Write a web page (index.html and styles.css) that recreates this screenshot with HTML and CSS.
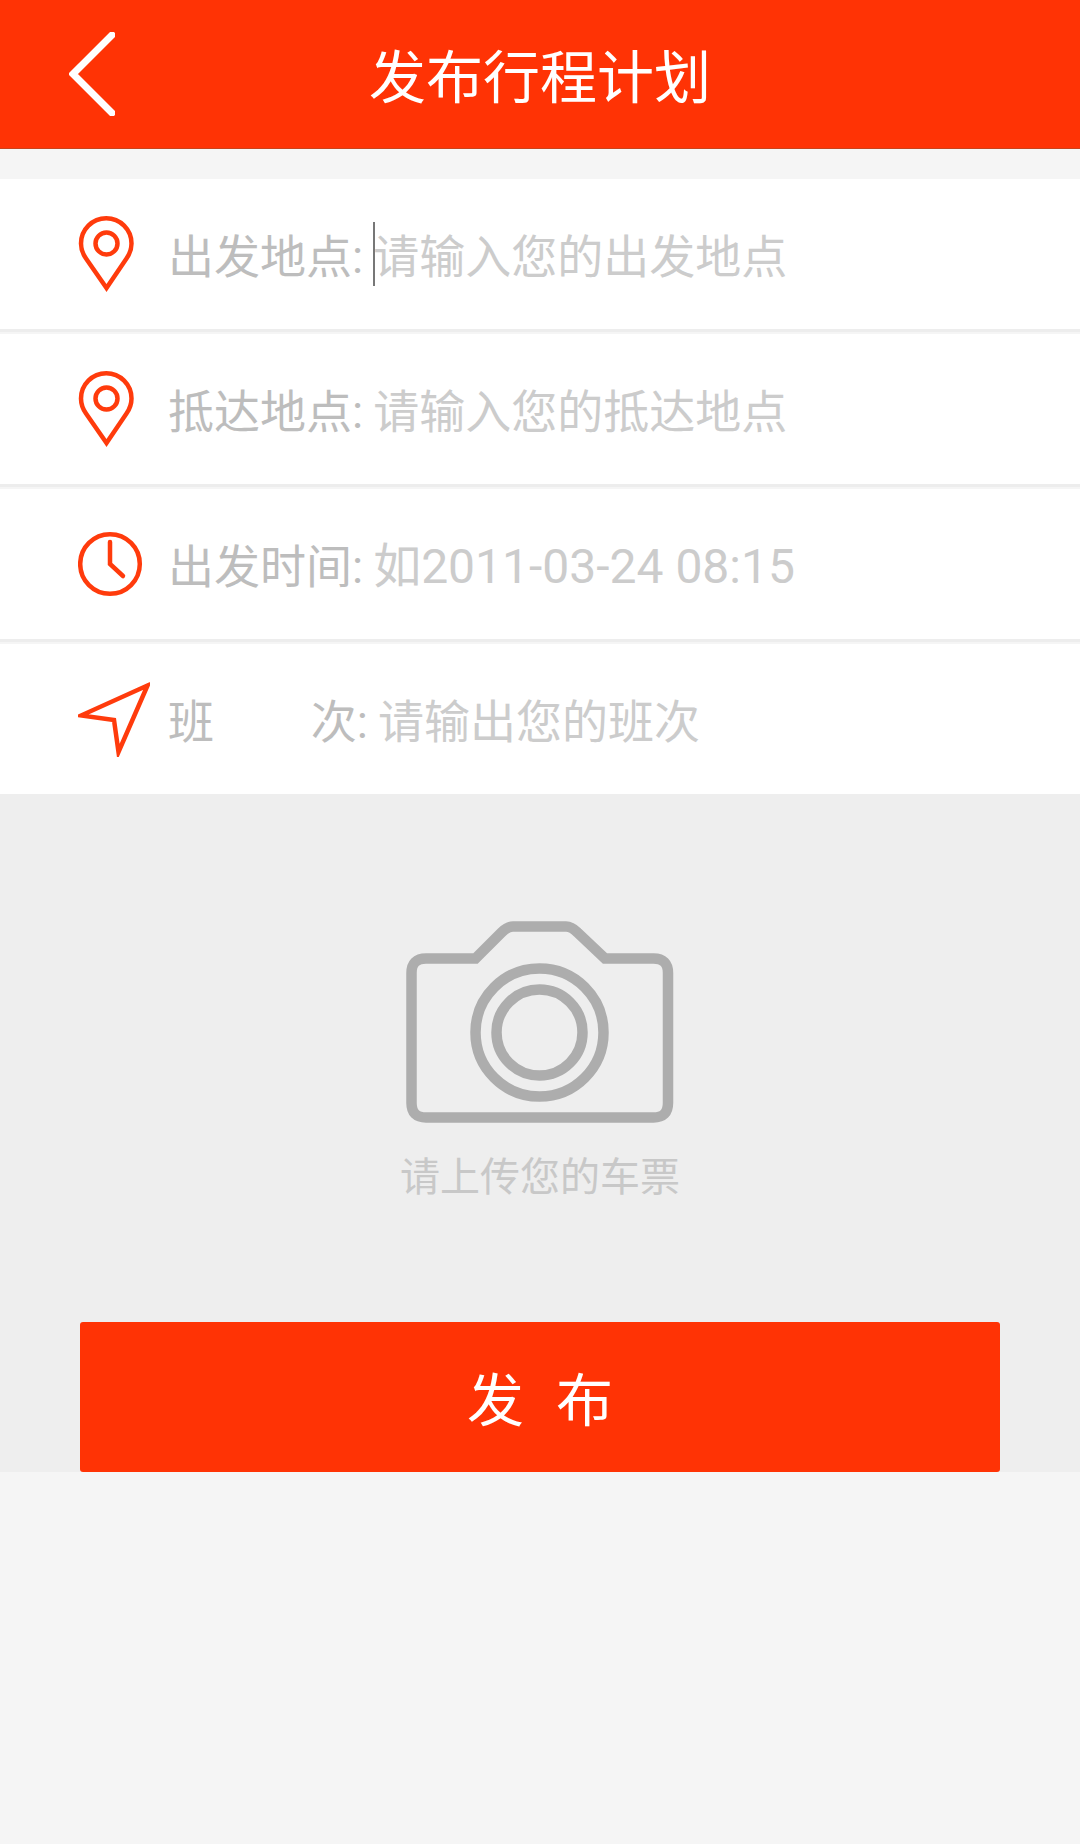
FILE: index.html
```html
<!DOCTYPE html>
<html lang="zh-CN">
<head>
<meta charset="utf-8">
<meta name="viewport" content="width=device-width, initial-scale=1">
<title>发布行程计划</title>
<link rel="stylesheet" href="styles.css">
</head>
<body>
<header class="topbar">
  <a class="back" href="#" aria-label="返回">
    <svg width="46" height="84" viewBox="0 0 46 84" aria-hidden="true"><path d="M43 3L4 42l39 39" fill="none" stroke="#fff" stroke-width="7" stroke-linecap="round"/></svg>
  </a>
  <h1 class="title">发布行程计划</h1>
</header>

<form class="plan">
  <div class="row">
    <svg class="icon" viewBox="0 0 72 76" aria-hidden="true"><path d="M28.500 72L8 42.500C4.500 37.500 3 33 3 27.500a25.200 25.200 0 0 1 50.500 0c0 5.500-1.500 10-5 15z"/><circle cx="28.500" cy="27.500" r="11"/></svg>
    <label class="label" for="from">出发地点:</label>
    <span class="field field-active"><input id="from" class="input" type="text" placeholder="请输入您的出发地点"></span>
  </div>
  <div class="row">
    <svg class="icon" viewBox="0 0 72 76" aria-hidden="true"><path d="M28.500 72L8 42.500C4.500 37.500 3 33 3 27.500a25.200 25.200 0 0 1 50.500 0c0 5.500-1.500 10-5 15z"/><circle cx="28.500" cy="27.500" r="11"/></svg>
    <label class="label" for="to">抵达地点:</label>
    <span class="field"><input id="to" class="input" type="text" placeholder="请输入您的抵达地点"></span>
  </div>
  <div class="row">
    <svg class="icon" viewBox="0 0 72 76" aria-hidden="true"><circle cx="32" cy="38" r="29.800"/><path d="M32 16v22l13 12" stroke-linecap="round"/></svg>
    <label class="label" for="time">出发时间:</label>
    <span class="field"><input id="time" class="input input-date" type="text" placeholder="如2011-03-24 08:15"></span>
  </div>
  <div class="row">
    <svg class="icon" viewBox="0 0 72 76" aria-hidden="true"><path d="M69.500 4.500L3 34.500l33 4.500 4.500 32z"/></svg>
    <label class="label label-spread" for="trip"><span>班</span><span>次:</span></label>
    <span class="field"><input id="trip" class="input" type="text" placeholder="请输出您的班次"></span>
  </div>

  <div class="panel">
    <button class="upload" type="button">
      <svg width="268" height="202" viewBox="0 0 268 202" fill="none" stroke="#adadad" stroke-width="10.500" aria-hidden="true">
        <path d="M20 37.500H69.500L95.500 11.500Q101.500 5.500 107 5.500H160Q165.500 5.500 171.500 11.500L199 37.500H247.500Q262 37.500 262 52V182Q262 196.500 247.500 196.500H20Q5.500 196.500 5.500 182V52Q5.500 37.500 20 37.500Z"/>
        <circle cx="133.500" cy="111.500" r="64"/>
        <circle cx="133.500" cy="111.500" r="43"/>
      </svg>
      <span>请上传您的车票</span>
    </button>
    <button class="submit" type="submit"><span>发</span><span>布</span></button>
  </div>
</form>
</body>
</html>
```
FILE: styles.css
```css
* {
  box-sizing: border-box;
}

body {
  margin: 0;
  background: #f5f5f5;
  font-family: Roboto, "Noto Sans CJK SC", sans-serif;
  font-size: 46px;
}

.topbar {
  display: grid;
  grid-template-columns: 184px 1fr 184px;
  align-items: center;
  height: 149px;
  background: #ff3305;
  border-bottom: 1px solid #c8431c;
}

.back {
  display: flex;
  padding-left: 69px;
}

.title {
  margin: 0;
  padding-top: 10px;
  color: #fff;
  font-size: 57px;
  font-weight: 400;
  line-height: 84px;
  text-align: center;
}

.plan {
  margin-top: 30px;
}

.row {
  display: flex;
  align-items: center;
  height: 150px;
  padding: 0 78px;
  background: #fff;
}

/* two-tone rule between rows */
.row + .row {
  height: 155px;
  border-top: 3px solid #ededed;
  box-shadow: inset 0 2px #f5f5f5;
  padding-top: 2px;
}

.icon {
  flex: none;
  width: 72px;
  height: 76px;
  margin-right: 18px;
  fill: none;
  stroke: #ff3b0c;
  stroke-width: 4.5;
}

.label {
  flex: none;
  margin-right: 10px;
  padding-top: 6px;
  color: #bdbdbd;
  line-height: 64px;
}

.label-spread {
  display: flex;
  justify-content: space-between;
  width: 200px;
}

.field {
  position: relative;
  flex: 1;
  display: flex;
}

.field-active::before {
  content: "";
  position: absolute;
  top: 0;
  left: 0;
  width: 2px;
  height: 100%;
  background: #777;
}

.input {
  width: 100%;
  height: 64px;
  padding: 6px 0 0;
  border: 0;
  outline: 0;
  background: none;
  color: #555;
  font: inherit;
}

.input-date {
  padding-top: 4px;
  font-size: 48px;
}

.input::placeholder {
  color: #ccc;
  opacity: 1;
}

.panel {
  display: flex;
  flex-direction: column;
  padding: 127px 80px 0;
  background: #eee;
}

.upload {
  display: flex;
  flex-direction: column;
  align-items: center;
  gap: 25px;
  align-self: center;
  margin-bottom: 114px;
  padding: 0;
  border: 0;
  background: none;
  color: #c8c8c8;
  font: inherit;
  font-size: 40px;
  line-height: 60px;
}

.submit {
  display: flex;
  justify-content: center;
  align-items: center;
  gap: 32px;
  height: 150px;
  padding: 0 0 2px;
  border: 0;
  border-radius: 3px;
  background: #ff3305;
  color: #fff;
  font: inherit;
  font-size: 57px;
}
```
